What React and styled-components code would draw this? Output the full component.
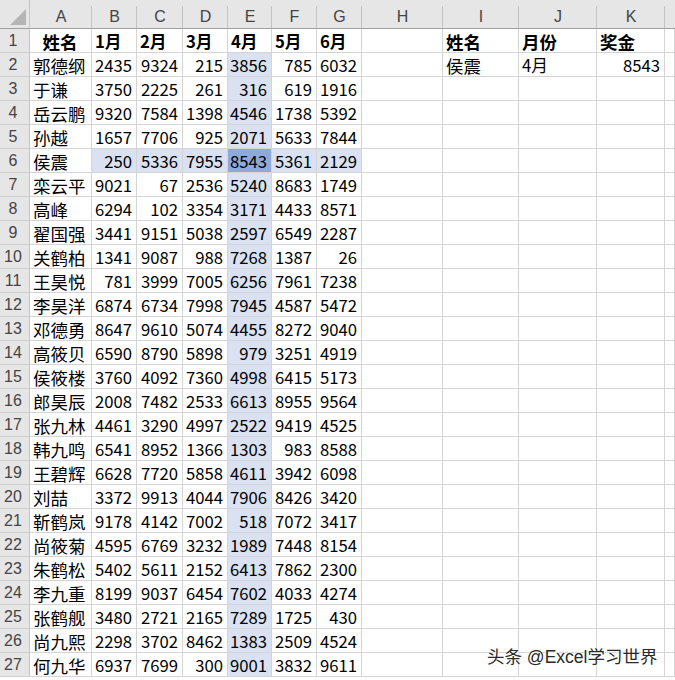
import React from "react"
import styled, { createGlobalStyle, css } from "styled-components"

const GlobalStyle = createGlobalStyle`
  html, body {
    margin: 0;
    padding: 0;
    background: #ffffff;
    overflow: hidden;
  }
  body {
    font-family: "Noto Sans CJK SC", "Liberation Sans", sans-serif;
  }
`

const COLS = ["A", "B", "C", "D", "E", "F", "G", "H", "I", "J", "K", ""]
const WIDTHS = "30px 62px 45px 46px 45px 44px 45px 45px 81px 76px 78px 68px 1fr"

const rows = [
  ["郭德纲", 2435, 9324, 215, 3856, 785, 6032],
  ["于谦", 3750, 2225, 261, 316, 619, 1916],
  ["岳云鹏", 9320, 7584, 1398, 4546, 1738, 5392],
  ["孙越", 1657, 7706, 925, 2071, 5633, 7844],
  ["侯震", 250, 5336, 7955, 8543, 5361, 2129],
  ["栾云平", 9021, 67, 2536, 5240, 8683, 1749],
  ["高峰", 6294, 102, 3354, 3171, 4433, 8571],
  ["翟国强", 3441, 9151, 5038, 2597, 6549, 2287],
  ["关鹤柏", 1341, 9087, 988, 7268, 1387, 26],
  ["王昊悦", 781, 3999, 7005, 6256, 7961, 7238],
  ["李昊洋", 6874, 6734, 7998, 7945, 4587, 5472],
  ["邓德勇", 8647, 9610, 5074, 4455, 8272, 9040],
  ["高筱贝", 6590, 8790, 5898, 979, 3251, 4919],
  ["侯筱楼", 3760, 4092, 7360, 4998, 6415, 5173],
  ["郎昊辰", 2008, 7482, 2533, 6613, 8955, 9564],
  ["张九林", 4461, 3290, 4997, 2522, 9419, 4525],
  ["韩九鸣", 6541, 8952, 1366, 1303, 983, 8588],
  ["王碧辉", 6628, 7720, 5858, 4611, 3942, 6098],
  ["刘喆", 3372, 9913, 4044, 7906, 8426, 3420],
  ["靳鹤岚", 9178, 4142, 7002, 518, 7072, 3417],
  ["尚筱菊", 4595, 6769, 3232, 1989, 7448, 8154],
  ["朱鹤松", 5402, 5611, 2152, 6413, 7862, 2300],
  ["李九重", 8199, 9037, 6454, 7602, 4033, 4274],
  ["张鹤舰", 3480, 2721, 2165, 7289, 1725, 430],
  ["尚九熙", 2298, 3702, 8462, 1383, 2509, 4524],
  ["何九华", 6937, 7699, 300, 9001, 3832, 9611],
]

const Page = styled.div`
  position: relative;
  width: 675px;
  height: 680px;
  overflow: hidden;
`

const Sheet = styled.div`
  display: grid;
  grid-template-columns: ${WIDTHS};
  grid-template-rows: 29px repeat(27, 24px);
`

const ColHead = styled.div`
  background: #e6e6e6;
  border-bottom: 1px solid #a0a0a0;
  color: #444444;
  font-family: "Liberation Sans", sans-serif;
  font-size: 16px;
  display: flex;
  align-items: center;
  justify-content: center;
  padding-top: 6px;
  box-sizing: border-box;
  position: relative;
  &::after {
    content: "";
    position: absolute;
    right: 0;
    top: 6px;
    bottom: 0;
    width: 1px;
    background: ${(p) => (p.$last ? "transparent" : "#c4c4c4")};
  }
`

const Corner = styled.div`
  background: #e6e6e6;
  border-bottom: 1px solid #a0a0a0;
  border-right: 1px solid #c4c4c4;
  box-sizing: border-box;
  display: flex;
  align-items: flex-end;
  justify-content: flex-end;
  padding: 0 3px 3px 0;
`

const RowHead = styled.div`
  background: #e6e6e6;
  border-right: 1px solid #c4c4c4;
  border-bottom: 1px solid #d0d0d0;
  box-sizing: border-box;
  color: #444444;
  font-family: "Liberation Sans", sans-serif;
  font-size: 16px;
  display: flex;
  align-items: center;
  justify-content: center;
  padding-right: 3px;
  padding-top: 1px;
`

const shade = {
  light: "#d9e1f2",
  dark: "#8ea9db",
  none: "#ffffff",
}

const Cell = styled.div`
  border-right: 1px solid #d4d4d4;
  border-bottom: 1px solid #d4d4d4;
  box-sizing: border-box;
  background: ${(p) => shade[p.$hl || "none"]};
  color: #000000;
  font-size: 16px;
  white-space: nowrap;
  overflow: hidden;
  display: flex;
  align-items: center;
  padding: 1px 4px 0 3px;
  justify-content: ${(p) =>
    p.$align === "right" ? "flex-end" : p.$align === "center" ? "center" : "flex-start"};
  ${(p) =>
    p.$bold &&
    css`
      font-weight: 700;
    `}
`

const NameText = styled.span`
  font-family: "Noto Sans CJK SC", sans-serif;
  font-size: ${(p) => p.$size || "17.5px"};
`

const NumText = styled.span`
  font-family: "Noto Sans CJK SC", sans-serif;
  font-size: 16.7px;
`

const Watermark = styled.div`
  position: absolute;
  left: 487px;
  top: 643px;
  font-family: "Liberation Sans", "Noto Sans CJK SC", sans-serif;
  font-size: 17.5px;
  color: #2a2a2a;
  text-shadow: 0 0 2px #ffffff, 0 0 2px #ffffff, 1px 1px 1px rgba(255, 255, 255, 0.9);
  white-space: nowrap;
`

const CornerMark = () => (
  <svg width="16" height="16" viewBox="0 0 16 16">
    <polygon points="16,0 16,16 0,16" fill="#b5b5b5" />
  </svg>
)

const headRow = ["姓名", "1月", "2月", "3月", "4月", "5月", "6月"]

function cellsFor(rowIdx) {
  // rowIdx is the sheet row number, starting at 1
  const out = []
  for (let c = 0; c < 12; c++) {
    let content = null
    let align = "left"
    let bold = false
    let hl = "none"
    if (rowIdx === 1) {
      if (c < 7) {
        content = <NameText $size={c === 0 ? "17.5px" : "16.7px"}>{headRow[c]}</NameText>
        align = c === 0 ? "center" : "left"
        bold = true
      } else if (c === 8) {
        content = <NameText>姓名</NameText>
        bold = true
      } else if (c === 9) {
        content = <NameText>月份</NameText>
        bold = true
      } else if (c === 10) {
        content = <NameText>奖金</NameText>
        bold = true
      }
    } else {
      const data = rows[rowIdx - 2]
      if (c === 0) {
        content = <NameText>{data[0]}</NameText>
      } else if (c < 7) {
        content = <NumText>{data[c]}</NumText>
        align = "right"
        if (rowIdx === 6) hl = "light"
        if (c === 4) hl = rowIdx === 6 ? "dark" : "light"
      } else if (rowIdx === 2 && c === 8) {
        content = <NameText>侯震</NameText>
      } else if (rowIdx === 2 && c === 9) {
        content = <NameText $size="16.7px">4月</NameText>
      } else if (rowIdx === 2 && c === 10) {
        content = <NumText>8543</NumText>
        align = "right"
      }
    }
    out.push(
      <Cell key={c} $align={align} $bold={bold} $hl={hl}>
        {content}
      </Cell>
    )
  }
  return out
}

export default function App() {
  return (
    <Page>
      <GlobalStyle />
      <Sheet>
        <Corner>
          <CornerMark />
        </Corner>
        {COLS.map((c, i) => (
          <ColHead key={i} $last={i === COLS.length - 1}>
            {c}
          </ColHead>
        ))}
        {Array.from({ length: 27 }, (_, i) => (
          <React.Fragment key={i}>
            <RowHead>{i + 1}</RowHead>
            {cellsFor(i + 1)}
          </React.Fragment>
        ))}
      </Sheet>
      <Watermark>头条 @Excel学习世界</Watermark>
    </Page>
  )
}
